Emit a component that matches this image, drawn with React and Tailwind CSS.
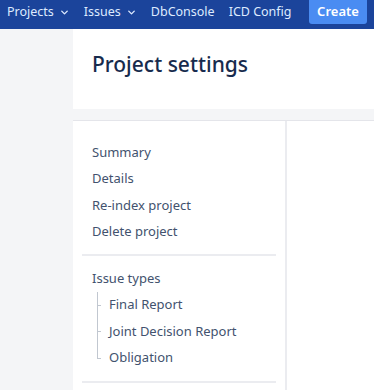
import { ChevronDown } from "lucide-react";

const MAIN_LINKS = ["Summary", "Details", "Re-index project", "Delete project"];
const ISSUE_TYPES = ["Final Report", "Joint Decision Report", "Obligation"];

export default function App() {
  return (
    <div
      className="min-h-screen bg-[#f4f5f7] text-[#42526e] overflow-hidden"
      style={{ fontFamily: '"Noto Sans", "Open Sans", sans-serif' }}
    >
      {/* ===== Top nav ===== */}
      <div className="h-[29px] bg-[#1b449b] flex items-start text-[#deebff] text-[12.5px] whitespace-nowrap">
        <div className="flex items-center h-[24px] pl-[7px]">
          <span>Projects</span>
          <ChevronDown size={11} strokeWidth={3} className="ml-[5px]" />
        </div>
        <div className="flex items-center h-[24px] ml-[14px]">
          <span>Issues</span>
          <ChevronDown size={11} strokeWidth={3} className="ml-[5px]" />
        </div>
        <div className="flex items-center h-[24px] ml-[14px]">DbConsole</div>
        <div className="flex items-center h-[24px] ml-[14px]">ICD Config</div>
        <button className="ml-auto mr-[7px] shrink-0 h-[24px] w-[58px] rounded-b-[3px] bg-[#4a8cf2] text-white font-semibold text-[13px] flex items-center justify-center">
          Create
        </button>
      </div>

      <div className="flex">
        {/* left rail */}
        <div className="w-[73px] shrink-0" />

        <div className="flex-1">
          {/* ===== Page header ===== */}
          <div className="bg-white h-[80px] flex items-center pl-[19px]">
            <h1 className="text-[21px] font-medium text-[#172b4d] -mt-[8px] whitespace-nowrap">
              Project settings
            </h1>
          </div>

          <div className="h-[11px]" />

          {/* ===== Content ===== */}
          <div className="bg-white border-t border-[#e4e5ea] flex h-[280px]">
            <div className="w-[214px] shrink-0 border-r-2 border-[#ebecf0] pt-[18px] px-[9px] whitespace-nowrap">
              <div className="pb-[9px]">
                {MAIN_LINKS.map((l) => (
                  <div key={l} className="h-[26.5px] flex items-center pl-[10px] text-[13px]">
                    {l}
                  </div>
                ))}
              </div>
              <div className="h-[2px] bg-[#ebecf0]" />
              <div className="pt-[9px] pb-[10px]">
                <div className="h-[26.5px] flex items-center pl-[10px] text-[13px]">Issue types</div>
                <div className="ml-[15px]">
                  {ISSUE_TYPES.map((t, i) => (
                    <div key={t} className="relative h-[26.5px] flex items-center pl-[12px] text-[13px]">
                      <span
                        className={`absolute left-0 top-0 w-px bg-[#c1c7d0] ${
                          i === ISSUE_TYPES.length - 1 ? "h-1/2" : "h-full"
                        }`}
                      />
                      <span className="absolute left-0 top-1/2 w-[4px] h-px bg-[#c1c7d0]" />
                      {t}
                    </div>
                  ))}
                </div>
              </div>
              <div className="h-[2px] bg-[#ebecf0]" />
            </div>
            <div className="flex-1" />
          </div>
        </div>
      </div>
    </div>
  );
}
